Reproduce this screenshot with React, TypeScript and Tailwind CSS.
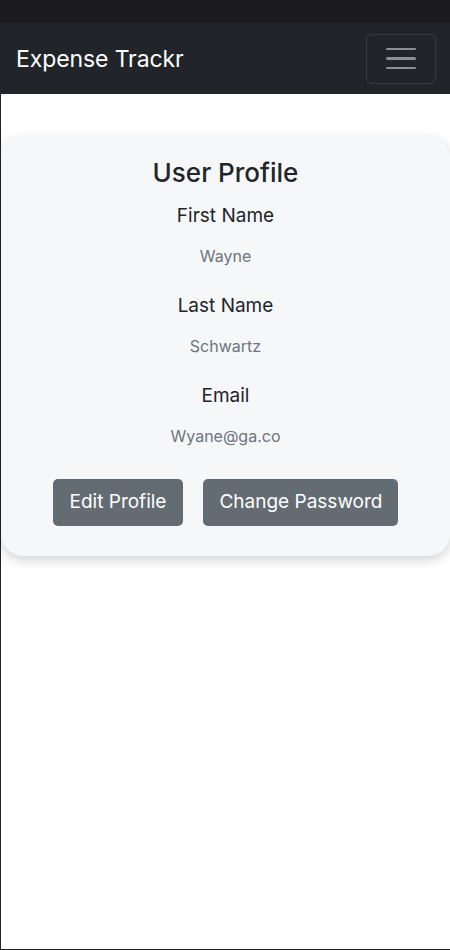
import { useState } from "react";

const fields = [
  { label: "First Name", value: "Wayne" },
  { label: "Last Name", value: "Schwartz" },
  { label: "Email", value: "Wyane@ga.co" },
];

export default function App() {
  const [open, setOpen] = useState(false);

  return (
    <div
      className="min-h-[950px] w-[450px] bg-white flex flex-col border-l border-b border-[#222]"
      style={{ fontFamily: "Inter, 'Noto Sans', sans-serif" }}
    >
      {/* Top strip */}
      <div className="h-[23px] bg-[#1c1c1e] -ml-px" />

      {/* Navbar */}
      <nav className="h-[71px] bg-[#212529] -ml-px flex items-center justify-between pl-4 pr-[14px]">
        <span className="text-white text-[23px] leading-none tracking-[-0.1px] mt-[2px]">Expense Trackr</span>
        <button
          onClick={() => setOpen(!open)}
          className="w-[70px] h-[50px] rounded-md border border-white/10 flex flex-col items-center justify-center gap-[7px]"
        >
          <span className="block w-[30px] h-[2.5px] bg-[#8c8f93] rounded" />
          <span className="block w-[30px] h-[2.5px] bg-[#8c8f93] rounded" />
          <span className="block w-[30px] h-[2.5px] bg-[#8c8f93] rounded" />
        </button>
      </nav>

      {/* Profile card */}
      <div className="pt-[42px]">
        <div className="bg-[#f6f7f9] rounded-[22px] shadow-[0_4px_12px_rgba(0,0,0,0.18)] pt-[21px] pb-[30px] flex flex-col items-center">
          <h3 className="text-[26px] font-medium text-[#212529] leading-[32px] mb-[15px]">User Profile</h3>
          <div className="flex flex-col items-center gap-[26px]">
            {fields.map((f) => (
              <div key={f.label} className="flex flex-col items-center">
                <h5 className="text-[19px] text-[#212529] leading-[24px]">{f.label}</h5>
                <p className="text-[16px] text-[#6c757d] leading-[24px] mt-[16px]">{f.value}</p>
              </div>
            ))}
          </div>
          <div className="flex gap-5 mt-[31px]">
            <button className="bg-[#636b73] text-white text-[19px] rounded-[5px] h-[47px] px-[17px]">Edit Profile</button>
            <button className="bg-[#636b73] text-white text-[19px] rounded-[5px] h-[47px] px-[16px]">Change Password</button>
          </div>
        </div>
      </div>
    </div>
  );
}
